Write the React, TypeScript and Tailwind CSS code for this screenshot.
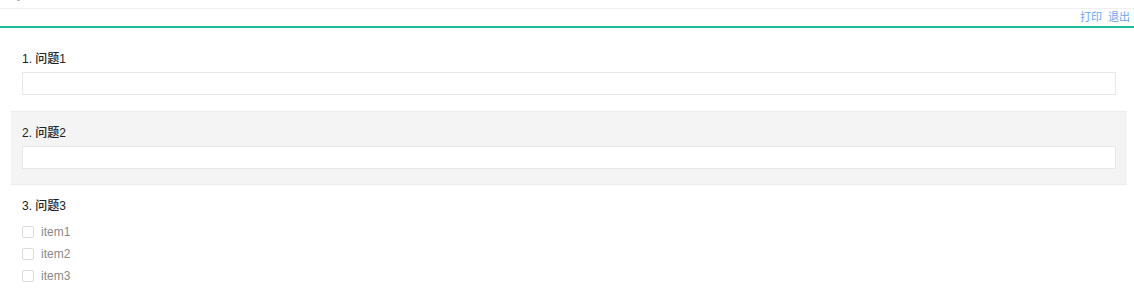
import { useState } from "react";

const font = { fontFamily: '"Liberation Sans", "Noto Sans CJK SC", sans-serif' };

function Question({ no, title, gray, children }: { no: number; title: string; gray?: boolean; children: React.ReactNode }) {
  return (
    <div
      className={`px-[11px] pt-[14px] pb-[15px] border-y ${
        gray ? "bg-[#f4f4f4] border-[#ebebeb]" : "bg-white border-transparent"
      }`}
    >
      <div className="text-[12px] leading-[14px] text-[#222] font-medium">
        {no}. {title}
      </div>
      {children}
    </div>
  );
}

export default function App() {
  const [answers, setAnswers] = useState({ q1: "", q2: "" });
  const [checked, setChecked] = useState<string[]>([]);

  const toggle = (k: string) =>
    setChecked((c) => (c.includes(k) ? c.filter((x) => x !== k) : [...c, k]));

  return (
    <div className="min-h-screen bg-white" style={font}>
      {/* top strip, mostly scrolled off */}
      <div className="h-[9px] border-b border-[#f0f0f0] pl-[17px]">
        <span className="block h-[1px] w-[3px] bg-[#bbb]" />
      </div>

      {/* action bar */}
      <div className="flex h-[17px] items-center justify-end gap-[6px] pr-[4px] text-[11px] text-[#6aa6f8]">
        <button>打印</button>
        <button>退出</button>
      </div>
      <div className="h-[2px] bg-[#1abc9c]" />

      <div className="ml-[11px] mr-[7px] mt-[9px]">
        <Question no={1} title="问题1">
          <input
            value={answers.q1}
            onChange={(e) => setAnswers({ ...answers, q1: e.target.value })}
            className="mt-[6px] block h-[23px] w-full border border-[#e8e8e8] bg-white px-2 text-[12px] outline-none"
          />
        </Question>
        <Question no={2} title="问题2" gray>
          <input
            value={answers.q2}
            onChange={(e) => setAnswers({ ...answers, q2: e.target.value })}
            className="mt-[6px] block h-[23px] w-full border border-[#e8e8e8] bg-white px-2 text-[12px] outline-none"
          />
        </Question>
        <div className="px-[11px] pt-[14px]">
          <div className="text-[12px] leading-[14px] text-[#222] font-medium">3. 问题3</div>
          <div className="mt-[13px] flex flex-col gap-[10px]">
            {["item1", "item2", "item3"].map((it) => (
              <label key={it} className="flex h-[12px] cursor-pointer items-center gap-[7px]">
                <span
                  onClick={() => toggle(it)}
                  className={`h-[12px] w-[12px] rounded-[2px] border ${
                    checked.includes(it) ? "border-[#1abc9c] bg-[#1abc9c]" : "border-[#dcdcdc] bg-white"
                  }`}
                />
                <span className="text-[12px] text-[#8a8a8a]">{it}</span>
              </label>
            ))}
          </div>
        </div>
      </div>
    </div>
  );
}
